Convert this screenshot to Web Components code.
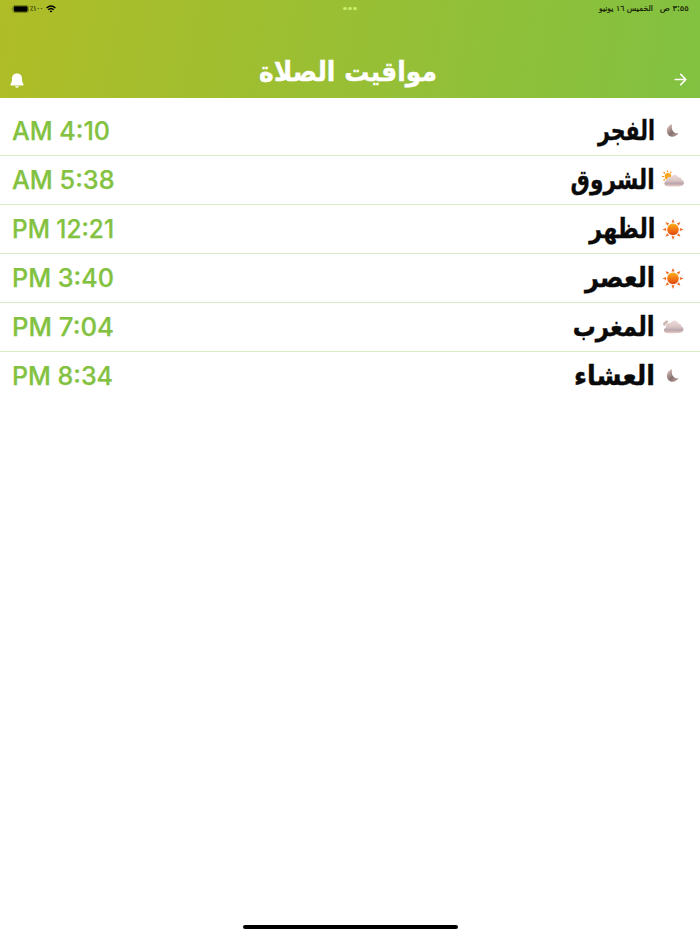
<!DOCTYPE html>
<html lang="ar">
<head>
<meta charset="utf-8">
<title>مواقيت الصلاة</title>
<style>
    body { margin: 0; background: #fff; font-family: "DejaVu Sans", sans-serif; }
</style>
</head>
<body>
<prayer-screen></prayer-screen>
<script>
// Text squeezed or stretched to a given width; "rtl" anchors it to the right edge
class FitText extends HTMLElement {
    connectedCallback() {
        this.attachShadow({ mode: 'open' });
        const w = this.getAttribute('width');
        const rtl = this.hasAttribute('rtl');
        this.shadowRoot.innerHTML = `
            <style>
                :host { display: flex; width: ${w}px; flex: none; justify-content: ${rtl ? 'flex-end' : 'flex-start'}; white-space: nowrap; }
                span { display: block; flex: none; transform-origin: ${rtl ? 'right' : 'left'} center; }
            </style>
            <span dir="${rtl ? 'rtl' : 'ltr'}"><slot></slot></span>
        `;
        const span = this.shadowRoot.querySelector('span');
        span.style.transform = `scaleX(${w / span.getBoundingClientRect().width})`;
    }
}

class StatusBar extends HTMLElement {
    connectedCallback() {
        this.attachShadow({ mode: 'open' });
        this.shadowRoot.innerHTML = `
            <style>
                :host { display: flex; justify-content: space-between; align-items: center; height: 17px; padding: 0 11px; font-size: 8px; line-height: 12px; color: #141a05; }
                .side { display: flex; align-items: center; width: 100px; }
                .right { justify-content: flex-end; gap: 7px; -webkit-text-stroke: .2px; }
                .pct { margin: 0 3px 0 1px; font-size: 8px; -webkit-text-stroke: .2px; }
                .dots { display: flex; gap: 1.6px; }
                .dots i { width: 3.8px; height: 3.8px; border-radius: 50%; background: #c6ed69; }
                svg { display: block; flex: none; }
            </style>
            <div class="side">
                <svg width="18" height="8" viewBox="0 0 18 8">
                    <path d="M1.3 2.8Q0 4 1.3 5.2Z" fill="#586210"/>
                    <rect x="1.9" y=".5" width="15.6" height="7" rx="2" fill="none" stroke="#6a7613" stroke-width=".8"/>
                    <rect x="2.8" y="1.3" width="13.8" height="5.4" rx="1.1" fill="#000"/>
                </svg>
                <fit-text class="pct" width="13">٪١٠٠</fit-text>
                <svg width="10" height="8" viewBox="0 0 10 8" fill="none" stroke="#000" stroke-width="1.35">
                    <path d="M.6 3Q5-1 9.4 3M2.2 4.8Q5 2.2 7.8 4.8"/>
                    <path d="M3.5 6Q5 4.8 6.5 6L5 7.6Z" fill="#000" stroke="none"/>
                </svg>
            </div>
            <div class="dots"><i></i><i></i><i></i></div>
            <div class="side right">
                <fit-text width="54" rtl>الخميس ١٦ يونيو</fit-text>
                <fit-text width="29" rtl>٣:٥٥ ص</fit-text>
            </div>
        `;
    }
}

class PageHeader extends HTMLElement {
    connectedCallback() {
        this.attachShadow({ mode: 'open' });
        this.shadowRoot.innerHTML = `
            <style>
                :host { display: block; height: 98px; background: linear-gradient(100deg, #afbd27 0%, #82c141 100%); }
                .bar { display: grid; grid-template-columns: 1fr auto 1fr; align-items: center; box-sizing: border-box; height: 81px; padding: 48px 13px 0 10px; color: #fff; }
                .title { font-size: 27px; font-weight: bold; line-height: 40px; margin-top: -20px; -webkit-text-stroke: .4px; }
                svg { display: block; margin-top: -2px; }
                .next { justify-self: end; margin-top: -5px; }
            </style>
            <status-bar></status-bar>
            <div class="bar">
                <svg width="14" height="16" viewBox="0 0 14 16" fill="#fff">
                    <path d="M7 .4C10.4.4 12 2.6 12 5.5C12 9 12.6 9.7 13.3 10.7C13.9 11.6 13.5 12.5 12.4 12.5H1.6C.5 12.5.1 11.6.7 10.7C1.4 9.7 2 9 2 5.5C2 2.6 3.6.4 7 .4ZM5 13.2H9Q8.5 14.7 7 14.7T5 13.2Z"/>
                </svg>
                <fit-text class="title" width="178" rtl>مواقيت الصلاة</fit-text>
                <svg class="next" width="13" height="13" viewBox="0 0 13 13" fill="none" stroke="#fff" stroke-width="1.6" stroke-linecap="round" stroke-linejoin="round">
                    <path d="M1.2 6.5H11.6M6.8 1.4L11.8 6.5L6.8 11.6"/>
                </svg>
            </div>
        `;
    }
}

const CLOUD = `
    <linearGradient id="c" x1="0" y1="0" x2="0" y2="1">
        <stop offset="0" stop-color="#efdcda"/><stop offset=".5" stop-color="#d9c4c4"/>
        <stop offset=".75" stop-color="#b8a4aa"/><stop offset="1" stop-color="#efd0c8"/>
    </linearGradient>`;

const ICONS = {
    moon: `
        <linearGradient id="m" x1="0" y1="0" x2="1" y2="1">
            <stop offset="0" stop-color="#e6cbc3"/><stop offset=".55" stop-color="#86706f"/><stop offset="1" stop-color="#c2aaa6"/>
        </linearGradient>
        <path fill="url(#m)" d="M10 4.3C5.2 5.8 3.5 11 6 14.4C8.6 17.8 13.8 17.4 16.6 13.2C12.6 14.2 8.8 10.8 10 4.3Z"/>`,
    sun: `
        <linearGradient id="s" x1="0" y1="0" x2="0" y2="1">
            <stop offset="0" stop-color="#ffb21c"/><stop offset=".5" stop-color="#f57712"/><stop offset="1" stop-color="#dc4713"/>
        </linearGradient>
        <circle cx="11" cy="11.4" r="5.8" fill="url(#s)"/>
        <g fill="#ed6a20">
            ${[0, 45, 90, 135, 180, 225, 270, 315].map(a =>
                `<path transform="rotate(${a} 11 11.4)" d="M11 .9L12.5 4.5H9.5Z"/>`).join('')}
        </g>`,
    suncloud: `${CLOUD}
        <circle cx="6" cy="7.4" r="3.3" fill="#fba51c"/>
        <path d="M5.5 1.4V3.2M1.5 3.3L3 4.5M0 7.5H2M1.6 11.5L3 10.4M9.3 2.6L8.3 4" stroke="#f88c17" stroke-width="1.2"/>
        <path fill="url(#c)" d="M4 16.9C1.6 15.7 2 12 4.7 11.2C4.7 8.4 7.4 7.2 9.2 8.2C10.7 4.9 15 5 16.3 8.2C18.5 8 19.7 9.5 19.5 10.8C22.2 11 22.8 15 20.5 16.4C18 17.9 6.5 17.9 4 16.9Z"/>`,
    cloud: `${CLOUD}
        <path d="M2.2 10C.5 8.5 1 6.2 2.8 6C3.3 4.3 5.4 4 6.4 5.5Z" fill="#cbb3b1"/>
        <path fill="url(#c)" d="M3.5 16.7C1.2 15.5 1.6 12.2 4 11.4C3 7.8 6.3 6 8.5 7.3C10 3.4 15 3.7 16.2 7.5C18.3 7.3 19.5 9 19.3 10.4C22.2 10.8 22.2 15.3 19.5 16.2C18 17.5 6 17.8 3.5 16.7Z"/>`
};

class PrayerRow extends HTMLElement {
    connectedCallback() {
        this.attachShadow({ mode: 'open' });
        this.shadowRoot.innerHTML = `
            <style>
                :host { display: flex; align-items: center; justify-content: space-between; box-sizing: border-box; height: 49.15px; padding: 0 16px 0 12px; border-bottom: 1px solid #d7edc3; }
                :host(:last-child) { border-bottom-color: transparent; }
                .time { font: 500 25px/36px Inter, sans-serif; color: #83c241; -webkit-text-stroke: .25px; }
                .prayer { display: flex; align-items: center; gap: 7px; }
                .name { font-size: 27px; font-weight: bold; line-height: 36px; color: #0a0a0a; -webkit-text-stroke: .4px; }
                svg { display: block; overflow: visible; }
            </style>
            <fit-text class="time" width="${this.getAttribute('time-width')}">${this.getAttribute('time')}</fit-text>
            <div class="prayer">
                <fit-text class="name" rtl width="${this.getAttribute('name-width')}"><slot></slot></fit-text>
                <svg width="22" height="22" viewBox="0 0 22 22">${ICONS[this.getAttribute('icon')]}</svg>
            </div>
        `;
    }
}

class PrayerScreen extends HTMLElement {
    connectedCallback() {
        this.attachShadow({ mode: 'open' });
        this.shadowRoot.innerHTML = `
            <style>
                :host { display: flex; flex-direction: column; height: 934px; background: #fff; }
                main { flex: 1; padding-top: 8.7px; }
                .home { width: 215px; height: 4px; border-radius: 2px; background: #000; margin: 0 auto 5.5px; }
            </style>
            <page-header></page-header>
            <main>
                <prayer-row icon="moon" time="AM 4:10" time-width="98" name-width="57">الفجر</prayer-row>
                <prayer-row icon="suncloud" time="AM 5:38" time-width="102.5" name-width="84">الشروق</prayer-row>
                <prayer-row icon="sun" time="PM 12:21" time-width="102" name-width="66">الظهر</prayer-row>
                <prayer-row icon="sun" time="PM 3:40" time-width="102" name-width="70">العصر</prayer-row>
                <prayer-row icon="cloud" time="PM 7:04" time-width="102" name-width="82">المغرب</prayer-row>
                <prayer-row icon="moon" time="PM 8:34" time-width="101" name-width="81">العشاء</prayer-row>
            </main>
            <div class="home"></div>
        `;
    }
}

customElements.define('fit-text', FitText);
customElements.define('status-bar', StatusBar);
customElements.define('page-header', PageHeader);
customElements.define('prayer-row', PrayerRow);
customElements.define('prayer-screen', PrayerScreen);
</script>
</body>
</html>
